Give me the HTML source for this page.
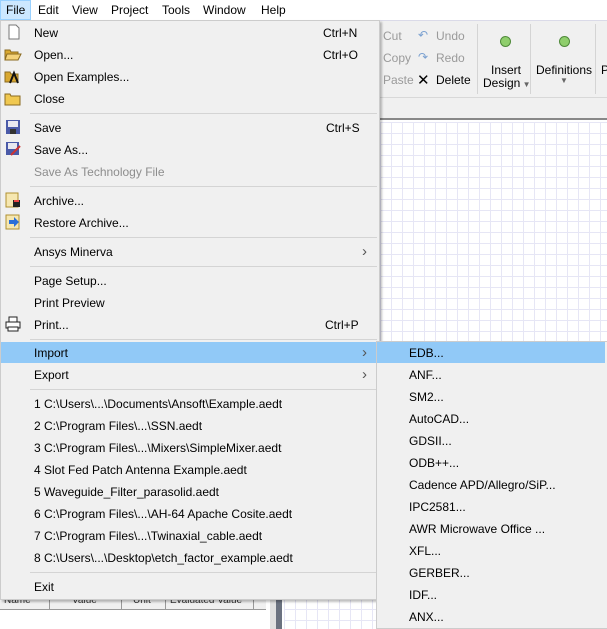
<!DOCTYPE html>
<html><head><style>
*{margin:0;padding:0;box-sizing:border-box}
body{width:607px;height:629px;overflow:hidden;background:#fff;font-family:"Liberation Sans",sans-serif;font-size:12px;color:#000;position:relative}
.a{position:absolute;white-space:nowrap}
.grid{background-color:#fff;background-image:linear-gradient(#e6e6f5 1px,transparent 1px),linear-gradient(90deg,#e6e6f5 1px,transparent 1px);background-size:11px 11px}
.it{position:absolute;left:34px;white-space:nowrap;line-height:14px;top:1px}
.sc{position:absolute;white-space:nowrap;line-height:14px}
.sep{position:absolute;left:30px;width:347px;height:1px;background:#d4d4d4}
.arr{position:absolute;left:362px;font-size:15px;color:#555;line-height:14px}
.si{position:absolute;left:409px;white-space:nowrap;line-height:14px}
</style></head><body>
<div class="a" style="left:0;top:0;width:607px;height:20px;background:#fff"></div>
<div class="a" style="left:0;top:0;width:31px;height:20px;background:#cce8ff;border:1px solid #99d1ff"></div>
<div class="a" style="left:6px;top:3px">File</div>
<div class="a" style="left:38px;top:3px">Edit</div>
<div class="a" style="left:72px;top:3px">View</div>
<div class="a" style="left:111px;top:3px">Project</div>
<div class="a" style="left:162px;top:3px">Tools</div>
<div class="a" style="left:203px;top:3px">Window</div>
<div class="a" style="left:261px;top:3px">Help</div>
<div class="a" style="left:380px;top:20px;width:227px;height:77px;background:#f0f0f0;border-top:1px solid #dadae8"></div>
<div class="a" style="left:380px;top:97px;width:227px;height:23px;background:#f0f0f0;border-top:1px solid #d8d8d8;border-bottom:2px solid #888"></div>
<div class="a" style="left:383px;top:29px;color:#9a9a9a">Cut</div>
<div class="a" style="left:383px;top:51px;color:#9a9a9a">Copy</div>
<div class="a" style="left:383px;top:73px;color:#9a9a9a">Paste</div>
<div class="a" style="left:418px;top:28px;color:#7aa0d0">↶</div>
<div class="a" style="left:436px;top:29px;color:#9a9a9a">Undo</div>
<div class="a" style="left:418px;top:50px;color:#7aa0d0">↷</div>
<div class="a" style="left:436px;top:51px;color:#9a9a9a">Redo</div>
<div class="a" style="left:417px;top:71px;font-size:15px">✕</div>
<div class="a" style="left:436px;top:73px">Delete</div>
<div class="a" style="left:477px;top:24px;width:1px;height:70px;background:#d4d4d4"></div>
<div class="a" style="left:500px;top:36px;width:11px;height:11px;border-radius:50%;background:#8fce6c;border:1px solid #4f8a3a"></div>
<div class="a" style="left:491px;top:63px">Insert</div>
<div class="a" style="left:483px;top:76px">Design<span style="font-size:8px;color:#666"> ▼</span></div>
<div class="a" style="left:530px;top:24px;width:1px;height:70px;background:#d4d4d4"></div>
<div class="a" style="left:559px;top:36px;width:11px;height:11px;border-radius:50%;background:#8fce6c;border:1px solid #4f8a3a"></div>
<div class="a" style="left:536px;top:63px">Definitions</div>
<div class="a" style="left:560px;top:76px;font-size:8px;color:#666">▼</div>
<div class="a" style="left:595px;top:24px;width:1px;height:70px;background:#d4d4d4"></div>
<div class="a" style="left:601px;top:63px">P</div>
<div class="a grid" style="left:380px;top:122px;width:227px;height:507px"></div>
<div class="a" style="left:270px;top:598px;width:10px;height:31px;background:#e0e0e0"></div>
<div class="a" style="left:276px;top:598px;width:6px;height:31px;background:#6b7280"></div>
<div class="a grid" style="left:284px;top:598px;width:96px;height:31px"></div>
<div class="a" style="left:0;top:598px;width:266px;height:12px;background:#f0f0f0;border-bottom:1px solid #999;font-size:10px;color:#333">
<span class="a" style="left:4px;top:-3px">Name</span><span class="a" style="left:49px;top:0;width:1px;height:12px;background:#999"></span><span class="a" style="left:72px;top:-3px">Value</span><span class="a" style="left:121px;top:0;width:1px;height:12px;background:#999"></span><span class="a" style="left:133px;top:-3px">Unit</span><span class="a" style="left:165px;top:0;width:1px;height:12px;background:#999"></span><span class="a" style="left:170px;top:-3px">Evaluated Value</span><span class="a" style="left:253px;top:0;width:1px;height:12px;background:#999"></span></div>
<div class="a" style="left:0;top:20px;width:380px;height:580px;background:#f0f0f0;border:1px solid #ccc;box-shadow:2px 2px 2px rgba(0,0,0,.25)"></div>
<div class="a" style="left:1px;top:342px;width:376px;height:21px;background:#91c9f7"></div>
<svg class="a" style="left:6px;top:24px" width="16" height="16"><path d="M3 1h7l3 3v11H3z" fill="#fff" stroke="#777"/></svg>
<svg class="a" style="left:4px;top:46px" width="18" height="16"><path d="M1 4h5l1 2h7v8H1z" fill="#d9a830" stroke="#8a6a20"/><path d="M3 8h14l-3 6H1z" fill="#f4d27a" stroke="#8a6a20"/></svg>
<svg class="a" style="left:4px;top:68px" width="18" height="16"><path d="M1 4h5l1 2h7v8H1z" fill="#d9a830" stroke="#8a6a20"/><path d="M6 15L10 5l4 10" fill="none" stroke="#111" stroke-width="2"/></svg>
<svg class="a" style="left:4px;top:90px" width="18" height="16"><path d="M1 4h5l1 2h9v9H1z" fill="#f0c850" stroke="#8a6a20"/></svg>
<svg class="a" style="left:5px;top:119px" width="16" height="16"><rect x="1" y="1" width="14" height="14" fill="#4a5aa8"/><rect x="3" y="2" width="10" height="6" fill="#e8e8f0"/><rect x="5" y="10" width="6" height="5" fill="#333"/></svg>
<svg class="a" style="left:5px;top:141px" width="16" height="16"><rect x="1" y="1" width="13" height="13" fill="#4a5aa8"/><rect x="3" y="2" width="9" height="6" fill="#e8e8f0"/><path d="M6 14l9-9" stroke="#c33" stroke-width="2"/></svg>
<svg class="a" style="left:5px;top:192px" width="16" height="16"><rect x="1" y="1" width="12" height="14" fill="#f6e7b0" stroke="#b09030"/><rect x="8" y="8" width="7" height="7" fill="#222"/><rect x="9" y="8" width="5" height="2" fill="#e44"/></svg>
<svg class="a" style="left:5px;top:214px" width="16" height="16"><rect x="1" y="1" width="13" height="14" fill="#f6e7b0" stroke="#b09030"/><path d="M4 6h5V3l5 5-5 5v-3H4z" fill="#2a6fd8"/></svg>
<svg class="a" style="left:4px;top:316px" width="18" height="16"><rect x="2" y="6" width="14" height="6" fill="#fff" stroke="#222"/><rect x="5" y="1" width="8" height="5" fill="#fff" stroke="#222"/><rect x="4" y="11" width="10" height="4" fill="#fff" stroke="#222"/></svg>
<div class="it" style="top:26px">New</div><div class="sc" style="left:323px;top:26px">Ctrl+N</div>
<div class="it" style="top:48px">Open...</div><div class="sc" style="left:323px;top:48px">Ctrl+O</div>
<div class="it" style="top:70px">Open Examples...</div>
<div class="it" style="top:92px">Close</div>
<div class="sep" style="top:113px"></div>
<div class="it" style="top:121px">Save</div><div class="sc" style="left:326px;top:121px">Ctrl+S</div>
<div class="it" style="top:143px">Save As...</div>
<div class="it" style="top:165px;color:#8d8d8d">Save As Technology File</div>
<div class="sep" style="top:186px"></div>
<div class="it" style="top:194px">Archive...</div>
<div class="it" style="top:216px">Restore Archive...</div>
<div class="sep" style="top:237px"></div>
<div class="it" style="top:245px">Ansys Minerva</div><div class="arr" style="top:245px">›</div>
<div class="sep" style="top:266px"></div>
<div class="it" style="top:274px">Page Setup...</div>
<div class="it" style="top:296px">Print Preview</div>
<div class="it" style="top:318px">Print...</div><div class="sc" style="left:325px;top:318px">Ctrl+P</div>
<div class="sep" style="top:339px"></div>
<div class="it" style="top:346px">Import</div><div class="arr" style="top:346px">›</div>
<div class="it" style="top:368px">Export</div><div class="arr" style="top:368px">›</div>
<div class="sep" style="top:389px"></div>
<div class="it" style="top:397px">1 C:\Users\...\Documents\Ansoft\Example.aedt</div>
<div class="it" style="top:419px">2 C:\Program Files\...\SSN.aedt</div>
<div class="it" style="top:441px">3 C:\Program Files\...\Mixers\SimpleMixer.aedt</div>
<div class="it" style="top:463px">4 Slot Fed Patch Antenna Example.aedt</div>
<div class="it" style="top:485px">5 Waveguide_Filter_parasolid.aedt</div>
<div class="it" style="top:507px">6 C:\Program Files\...\AH-64 Apache Cosite.aedt</div>
<div class="it" style="top:529px">7 C:\Program Files\...\Twinaxial_cable.aedt</div>
<div class="it" style="top:551px">8 C:\Users\...\Desktop\etch_factor_example.aedt</div>
<div class="sep" style="top:572px"></div>
<div class="it" style="top:580px">Exit</div>
<div class="a" style="left:376px;top:341px;width:231px;height:288px;background:#f0f0f0;border:1px solid #ccc;border-right:none"></div>
<div class="a" style="left:377px;top:342px;width:228px;height:21px;background:#91c9f7"></div>
<div class="si" style="top:346px">EDB...</div>
<div class="si" style="top:368px">ANF...</div>
<div class="si" style="top:390px">SM2...</div>
<div class="si" style="top:412px">AutoCAD...</div>
<div class="si" style="top:434px">GDSII...</div>
<div class="si" style="top:456px">ODB++...</div>
<div class="si" style="top:478px">Cadence APD/Allegro/SiP...</div>
<div class="si" style="top:500px">IPC2581...</div>
<div class="si" style="top:522px">AWR Microwave Office ...</div>
<div class="si" style="top:544px">XFL...</div>
<div class="si" style="top:566px">GERBER...</div>
<div class="si" style="top:588px">IDF...</div>
<div class="si" style="top:610px">ANX...</div>
</body></html>
